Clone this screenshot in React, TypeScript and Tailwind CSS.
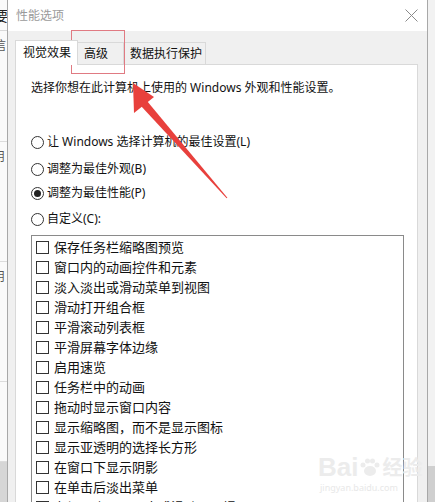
import React from "react";

const items = [
  "保存任务栏缩略图预览",
  "窗口内的动画控件和元素",
  "淡入淡出或滑动菜单到视图",
  "滑动打开组合框",
  "平滑滚动列表框",
  "平滑屏幕字体边缘",
  "启用速览",
  "任务栏中的动画",
  "拖动时显示窗口内容",
  "显示缩略图，而不是显示图标",
  "显示亚透明的选择长方形",
  "在窗口下显示阴影",
  "在单击后淡出菜单",
  "在视图中淡入淡出或滑动工具提示",
  "在鼠标指针下显示阴影",
];

function Radio({ checked, label, className }: { checked?: boolean; label: string; className?: string }) {
  return (
    <div className={"flex items-center h-[18px] " + (className ?? "")}>
      <div className="w-[13px] h-[13px] rounded-full border border-[#333] bg-white flex items-center justify-center">
        {checked && <div className="w-[7px] h-[7px] rounded-full bg-[#222]" />}
      </div>
      <span className="ml-[3px] text-[12px] leading-[18px] text-[#111]">{label}</span>
    </div>
  );
}

export default function App() {
  return (
    <div
      className="relative w-[435px] h-[502px] overflow-hidden bg-white flex"
      style={{ fontFamily: '"Noto Sans", "Noto Sans CJK SC", sans-serif' }}
    >
      {/* background window strip (left) */}
      <div className="w-[7px] h-full bg-[#fafafa] overflow-hidden flex flex-col shrink-0">
        <div className="h-[31px] border-b border-[#d8d8d8] text-[14px] leading-[31px] text-[#222] -ml-[6px]">要</div>
        <div className="h-[111px] border-b border-[#dcdcdc] text-[12px] leading-[30px] text-[#555] -ml-[6px]">信</div>
        <div className="h-[120px] border-b border-[#dcdcdc] text-[12px] leading-[30px] text-[#555] -ml-[7px]">用</div>
        <div className="h-[120px] border-b border-[#dcdcdc] text-[12px] leading-[30px] text-[#555] -ml-[7px]">用</div>
        <div className="h-[80px] border-b border-[#dcdcdc]" />
        <div className="flex-1 bg-[#d6d6d6]" />
      </div>

      {/* dialog */}
      <div className="w-[421px] h-full shrink-0 border-l border-r border-[#a8a8a8] flex flex-col">
        <div className="h-[31px] bg-white flex items-center justify-between pl-[8px] pr-[8px] shrink-0">
          <span className="text-[12px] text-[#9a9a9a]">性能选项</span>
          <svg width="13" height="13" viewBox="0 0 13 13" className="mr-[1px]">
            <path d="M0.5 0.5 L12.5 12.5 M12.5 0.5 L0.5 12.5" stroke="#8a8a8a" strokeWidth="1" fill="none" />
          </svg>
        </div>
        <div className="flex-1 bg-[#f0f0f0] pl-[7px] pr-[9px] pt-[9px] flex flex-col">
          <div className="flex items-end h-[24px] shrink-0">
            <div className="relative z-10 h-[25px] -mb-px w-[63px] bg-white border border-b-0 border-[#d9d9d9] text-[12px] text-[#111] pl-[7px] leading-[23px]">
              视觉效果
            </div>
            <div className="h-[22px] w-[46px] bg-[#f0f0f0] border-t border-r border-[#d9d9d9] text-[12px] text-[#111] pl-[6px] leading-[21px]">
              高级
            </div>
            <div className="h-[22px] w-[82px] bg-[#f0f0f0] border-t border-r border-[#d9d9d9] text-[12px] text-[#111] pl-[6px] leading-[21px]">
              数据执行保护
            </div>
          </div>
          <div className="flex-1 bg-white border border-[#d9d9d9] border-b-0 pl-[15px] pr-[13px] pt-[14px] flex flex-col overflow-hidden">
            <div className="text-[12px] leading-[17px] text-[#111]">选择你想在此计算机上使用的 Windows 外观和性能设置。</div>
            <Radio className="mt-[37px]" label="让 Windows 选择计算机的最佳设置(L)" />
            <Radio className="mt-[9px]" label="调整为最佳外观(B)" />
            <Radio className="mt-[6px]" checked label="调整为最佳性能(P)" />
            <Radio className="mt-[8px]" label="自定义(C):" />
            <div className="mt-[7px] flex-1 border border-b-0 border-[#8a8a8a] pt-[1px] pl-[4px] flex flex-col overflow-hidden">
              {items.map((t) => (
                <div key={t} className="h-[20px] shrink-0 flex items-center">
                  <div className="w-[13px] h-[13px] border border-[#333] bg-white" />
                  <span className="ml-[5px] text-[13px] leading-[20px] text-[#111]">{t}</span>
                </div>
              ))}
            </div>
          </div>
        </div>
      </div>

      {/* right background strip */}
      <div className="w-[7px] h-full shrink-0 flex flex-col bg-[#f4f4f4]">
        <div className="h-[466px] bg-[#f2f2f2]" />
        <div className="flex-1 bg-[#cfcfcf]" />
      </div>

      {/* watermark */}
      <div className="absolute left-[318px] top-[452px] flex flex-col items-start pointer-events-none">
        <div className="flex items-center text-[26px] leading-[30px] font-bold text-[#ececec]" style={{ fontFamily: '"Liberation Sans", sans-serif' }}>
          <span>Bai</span>
          <svg width="22" height="22" viewBox="0 0 22 22" className="mx-[1px]">
            <ellipse cx="11" cy="15" rx="6" ry="5" fill="#ececec" />
            <circle cx="4" cy="9" r="2.5" fill="#ececec" />
            <circle cx="8.5" cy="5" r="2.5" fill="#ececec" />
            <circle cx="13.5" cy="5" r="2.5" fill="#ececec" />
            <circle cx="18" cy="9" r="2.5" fill="#ececec" />
          </svg>
          <span className="text-[20px]" style={{ fontFamily: '"Noto Sans CJK SC", sans-serif' }}>经验</span>
        </div>
        <div className="text-[9px] leading-[12px] text-[#e8e8e8] ml-[2px]">jingyan.baidu.com</div>
      </div>

      {/* red annotation rectangle */}
      <div className="absolute left-[71px] top-[30px] w-[54px] h-[44px] border border-[#e07a82] pointer-events-none" />

      {/* red arrow */}
      <svg className="absolute left-0 top-0 pointer-events-none" width="435" height="502">
        <polygon points="133,83 134,113 154,97" fill="#e8403c" />
        <polygon points="147,101 141,106 226.6,198.3 227.4,197.7" fill="#e8403c" />
      </svg>
    </div>
  );
}
